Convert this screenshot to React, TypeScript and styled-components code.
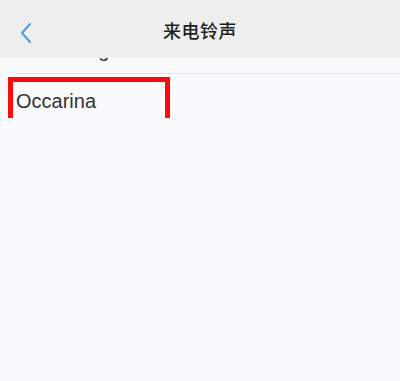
import React from "react";
import styled, { createGlobalStyle } from "styled-components";

const Global = createGlobalStyle`
  html, body { margin: 0; padding: 0; background: #faf9fb; }
  body { font-family: "Liberation Sans", Arial, "Noto Sans CJK SC", sans-serif; }
`;

const Screen = styled.div`
  width: 400px;
  height: 381px;
  background: #faf9fb;
  display: flex;
  flex-direction: column;
  overflow: hidden;
`;

const Header = styled.header`
  height: 58px;
  flex: 0 0 58px;
  background: #efeeef;
  display: grid;
  grid-template-columns: 60px 1fr 60px;
  align-items: center;
  position: relative;
  z-index: 1;
`;

const BackButton = styled.button`
  border: 0;
  background: none;
  padding: 8px 0 0 19px;
  height: 58px;
  box-sizing: border-box;
  display: flex;
  align-items: center;
  cursor: pointer;
`;

const Title = styled.h1`
  margin: 0;
  text-align: center;
  font-family: "Noto Sans CJK SC", "Noto Sans", sans-serif;
  font-size: 18px;
  font-weight: 500;
  color: #1f1f1f;
  letter-spacing: 0.5px;
  padding-top: 2px;
`;

const List = styled.ul`
  list-style: none;
  margin: 0;
  padding: 0;
  flex: 1;
`;

const Row = styled.li<{ $clip?: boolean }>`
  position: relative;
  margin-left: 16px;
  font-size: 20px;
  color: #333333;
  ${(p) =>
    p.$clip
      ? `height: 15px; overflow: hidden; border-bottom: 1px solid #e4e3e6;`
      : `height: 60px; display: flex; align-items: flex-start; padding-top: 16px; box-sizing: border-box;`}
`;

const ClipText = styled.span`
  display: block;
  line-height: 20px;
  margin-top: -18px;
`;

const Highlight = styled.div`
  position: absolute;
  left: -8px;
  top: 3px;
  width: 162px;
  height: 41px;
  border: 5px solid #ff0a0a;
  border-bottom: none;
  box-sizing: border-box;
  pointer-events: none;
`;

export default function App() {
  return (
    <Screen>
      <Global />
      <Header>
        <BackButton aria-label="返回">
          <svg width="14" height="22" viewBox="0 0 14 22" fill="none">
            <path d="M11 2 L3 11 L11 20" stroke="#4a9de2" strokeWidth="2" strokeLinecap="round" strokeLinejoin="round" />
          </svg>
        </BackButton>
        <Title>来电铃声</Title>
        <div />
      </Header>
      <List>
        <Row $clip>
          <ClipText>Calm Ring</ClipText>
        </Row>
        <Row>
          Occarina
          <Highlight />
        </Row>
      </List>
    </Screen>
  );
}
